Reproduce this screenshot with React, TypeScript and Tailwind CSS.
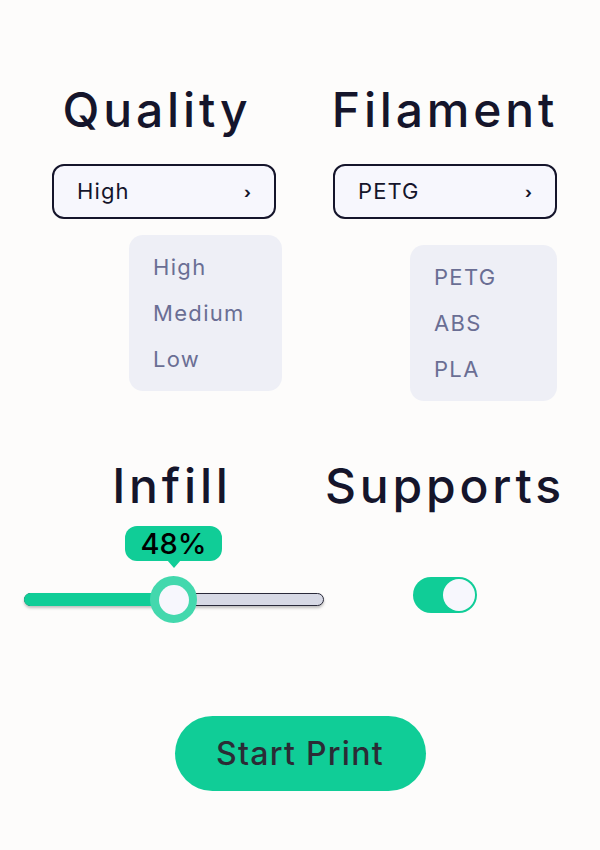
const GREEN = "bg-[#10cd97]";

function Select({ value }: { value: string }) {
  return (
    <div className="mx-auto mt-[26px] flex h-[55px] w-[224px] items-center justify-between rounded-[12px] border-2 border-[#15152b] bg-[#f7f7fd] pl-[23px] pr-[22px] text-[22px] tracking-[0.05em]">
      <span>{value}</span>
      <span className="text-[16px] font-bold">›</span>
    </div>
  );
}

function OptionList({ items, className }: { items: string[]; className: string }) {
  return (
    <ul className={`ml-[89px] rounded-[14px] bg-[#eeeff6] py-[9px] pl-[24px] text-[22px] tracking-[0.06em] text-[#6a6e94] ${className}`}>
      {items.map((item) => (
        <li key={item} className="flex h-[46px] items-center">
          {item}
        </li>
      ))}
    </ul>
  );
}

function Heading({ children, className = "" }: { children: string; className?: string }) {
  return (
    <h2 className={`text-center text-[48px] font-medium leading-[56px] tracking-[0.08em] ${className}`}>
      {children}
    </h2>
  );
}

export default function App() {
  const infill = 48;

  return (
    <div className="min-h-[850px] w-[600px] bg-[#fdfcfb] font-['Inter',sans-serif] text-[#15152b]">
      <div className="grid grid-cols-[248px_248px] gap-x-[33px] px-[40px] pt-[82px]">
        <div>
          <Heading className="pr-[14px]">Quality</Heading>
          <Select value="High" />
          <OptionList items={["High", "Medium", "Low"]} className="mt-[16px] w-[153px]" />
        </div>
        <div>
          <Heading>Filament</Heading>
          <Select value="PETG" />
          <OptionList items={["PETG", "ABS", "PLA"]} className="mt-[26px] w-[147px]" />
        </div>
      </div>

      <div className="mt-[57px] grid grid-cols-[300px_242px] pl-[24px]">
        <div>
          <Heading className="pr-[4px]">Infill</Heading>
          <div className="relative mt-[62px] flex h-[47px] items-center">
            <div className="h-[13px] w-full rounded-full border border-[#2a2a3a] bg-[#d7d9e5] shadow-[0_2px_3px_rgba(0,0,0,0.25)]" />
            <div className={`absolute left-0 top-[17px] h-[13px] w-[150px] rounded-l-full ${GREEN}`} />
            <div className="absolute left-[126px] top-0 flex size-[47px] items-center justify-center rounded-full bg-[#43d8ad]">
              <div className="size-[30px] rounded-full bg-[#f7f7fd]" />
            </div>
            <div className={`absolute bottom-[calc(100%+15px)] left-[101px] flex h-[35px] w-[97px] items-center justify-center rounded-[12px] text-[29px] font-medium text-black ${GREEN}`}>
              {infill}%
              <div className="absolute -bottom-[7px] left-1/2 -translate-x-1/2 border-x-[7px] border-t-[8px] border-x-transparent border-t-[#10cd97]" />
            </div>
          </div>
        </div>
        <div>
          <Heading>Supports</Heading>
          <div className={`mx-auto mt-[63px] flex h-[36px] w-[64px] items-center justify-end rounded-full p-[2px] ${GREEN}`}>
            <div className="size-[32px] rounded-full bg-[#f7f7fd]" />
          </div>
        </div>
      </div>

      <div className="mt-[93px] flex justify-center">
        <button className={`h-[75px] w-[251px] rounded-full text-[32px] font-medium tracking-[0.04em] text-[#2b2b35] ${GREEN}`}>
          Start Print
        </button>
      </div>
    </div>
  );
}
